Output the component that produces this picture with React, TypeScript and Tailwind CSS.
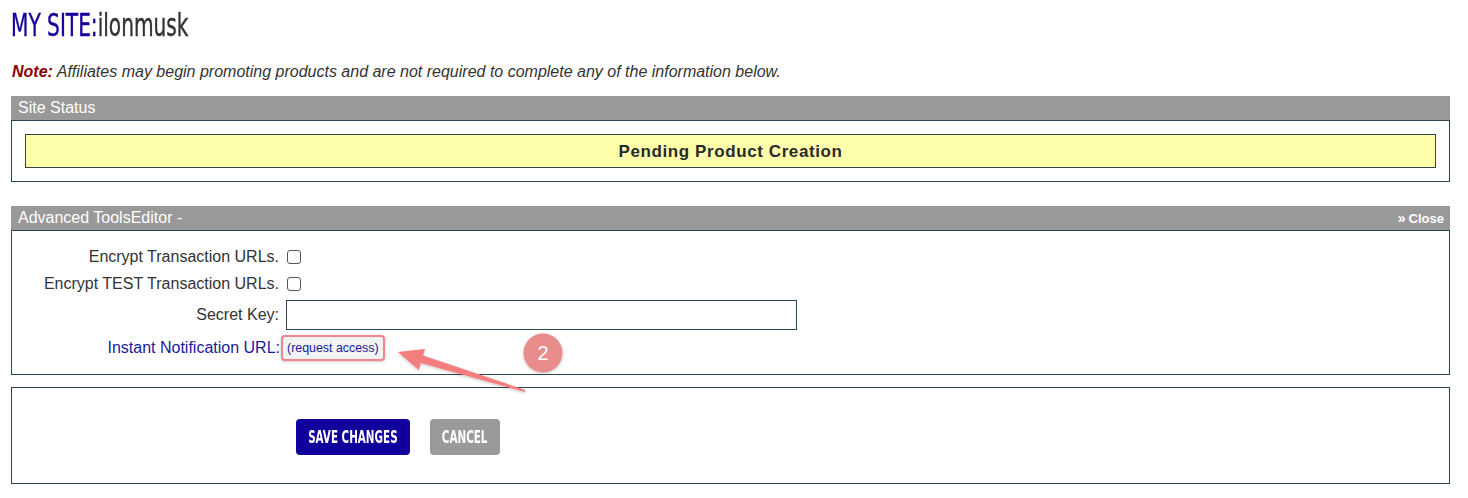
import React from 'react';

const panelBorder = 'border border-[#2d4654]';

function PanelHeader({ title, right }: { title: string; right?: React.ReactNode }) {
  return (
    <div className="flex h-[24px] items-center justify-between bg-[#999999] pl-[7px] pr-[6px] text-white">
      <span className="text-[16px] leading-none">{title}</span>
      {right}
    </div>
  );
}

function CheckRow({ label }: { label: string }) {
  return (
    <>
      <div className="h-[27px] pr-[6px] text-right leading-[27px]">{label}</div>
      <div className="flex h-[27px] items-center">
        <span className="ml-[2px] block h-[14px] w-[14px] rounded-[3px] border border-[#555]" />
      </div>
    </>
  );
}

function BtnLabel({ children }: { children: React.ReactNode }) {
  return (
    <span className="inline-block shrink-0 origin-center scale-x-[0.64] font-['DejaVu_Sans_Condensed',sans-serif] text-[18px] font-bold">
      {children}
    </span>
  );
}

export default function App() {
  return (
    <div className="relative min-h-[498px] w-[1468px] overflow-hidden bg-white font-['Liberation_Sans',Arial,sans-serif] text-[#333]">
      <div className="pl-[11px] pr-[18px] pt-[7px]">
        <h1 className="h-[36px] origin-left scale-x-[0.7] whitespace-nowrap font-['DejaVu_Sans_Condensed','DejaVu_Sans',sans-serif] text-[32px] leading-[36px] [-webkit-text-stroke:0.4px_currentColor]">
          <span className="text-[#15009a]">MY SITE:</span>
          <span className="text-[#333]">ilonmusk</span>
        </h1>

        <p className="mt-[20px] pl-[1px] text-[16px] italic leading-[18px] text-[#333]">
          <span className="font-bold text-[#8b0000]">Note:</span> Affiliates may begin promoting products and are not
          required to complete any of the information below.
        </p>

        {/* site status */}
        <div className="mt-[15px]">
          <PanelHeader title="Site Status" />
          <div className={`${panelBorder} px-[13px] py-[13px]`}>
            <div className="flex h-[34px] items-center justify-center border border-[#2d4654] bg-[#ffffaa] pt-[1px] text-[17px] font-bold tracking-[0.6px] text-[#2a2a2a]">
              Pending Product Creation
            </div>
          </div>
        </div>

        {/* advanced tools */}
        <div className="mt-[24px]">
          <PanelHeader
            title="Advanced ToolsEditor -"
            right={
              <span className="text-[13px] font-bold leading-none">
                <span className="mr-[3px] text-[14px]">»</span>Close
              </span>
            }
          />
          <div className={`${panelBorder} pb-[11px] pt-[12px] text-[16px]`}>
            <div className="grid grid-cols-[273px_1fr]">
              <CheckRow label="Encrypt Transaction URLs." />
              <CheckRow label="Encrypt TEST Transaction URLs." />
              <div className="flex h-[36px] items-center justify-end pr-[6px]">Secret Key:</div>
              <div className="flex h-[36px] items-center">
                <div className="ml-[1px] h-[30px] w-[511px] border border-[#2d4654]" />
              </div>
              <div className="flex h-[30px] items-center justify-end pr-[5px] text-[#1a1a9c]">Instant Notification URL:</div>
              <div className="flex h-[30px] items-center">
                <span className="-ml-[4px] rounded-[4px] border-2 border-[#f4858a] bg-[#f3f3f3] px-[4px] py-[3px] text-[12.4px] leading-[16px] text-[#1a1a9c] shadow-[0_1px_3px_rgba(0,0,0,0.2)]">
                  (request access)
                </span>
              </div>
            </div>
          </div>
        </div>

        {/* buttons */}
        <div className={`${panelBorder} mt-[12px] flex h-[97px] items-center gap-[20px] pl-[284px] pt-[2px]`}>
          <button className="flex h-[36px] w-[114px] items-center justify-center whitespace-nowrap rounded-[4px] bg-[#12009c] text-white">
            <BtnLabel>SAVE CHANGES</BtnLabel>
          </button>
          <button className="flex h-[36px] w-[70px] items-center justify-center whitespace-nowrap rounded-[4px] bg-[#9a9a9a] text-white">
            <BtnLabel>CANCEL</BtnLabel>
          </button>
        </div>
      </div>

      {/* annotation: step marker and arrow */}
      <svg className="pointer-events-none absolute left-0 top-0" width="1468" height="498">
        <defs>
          <filter id="sh" x="-50%" y="-50%" width="200%" height="200%">
            <feDropShadow dx="0" dy="1" stdDeviation="1.5" floodColor="#000" floodOpacity="0.25" />
          </filter>
        </defs>
        <g filter="url(#sh)">
          <path
            d="M398 352 L425 349 L423 355.5 L525.3 390 L524.7 392 L420.7 363 L418.7 370 Z"
            fill="#f47d7d"
          />
        </g>
        <g filter="url(#sh)">
          <circle cx="543" cy="353" r="19.5" fill="#e98c8c" />
        </g>
      </svg>
      <div className="pointer-events-none absolute left-[524px] top-[334px] flex h-[38px] w-[38px] items-center justify-center text-[20px] text-white">
        2
      </div>
    </div>
  );
}
